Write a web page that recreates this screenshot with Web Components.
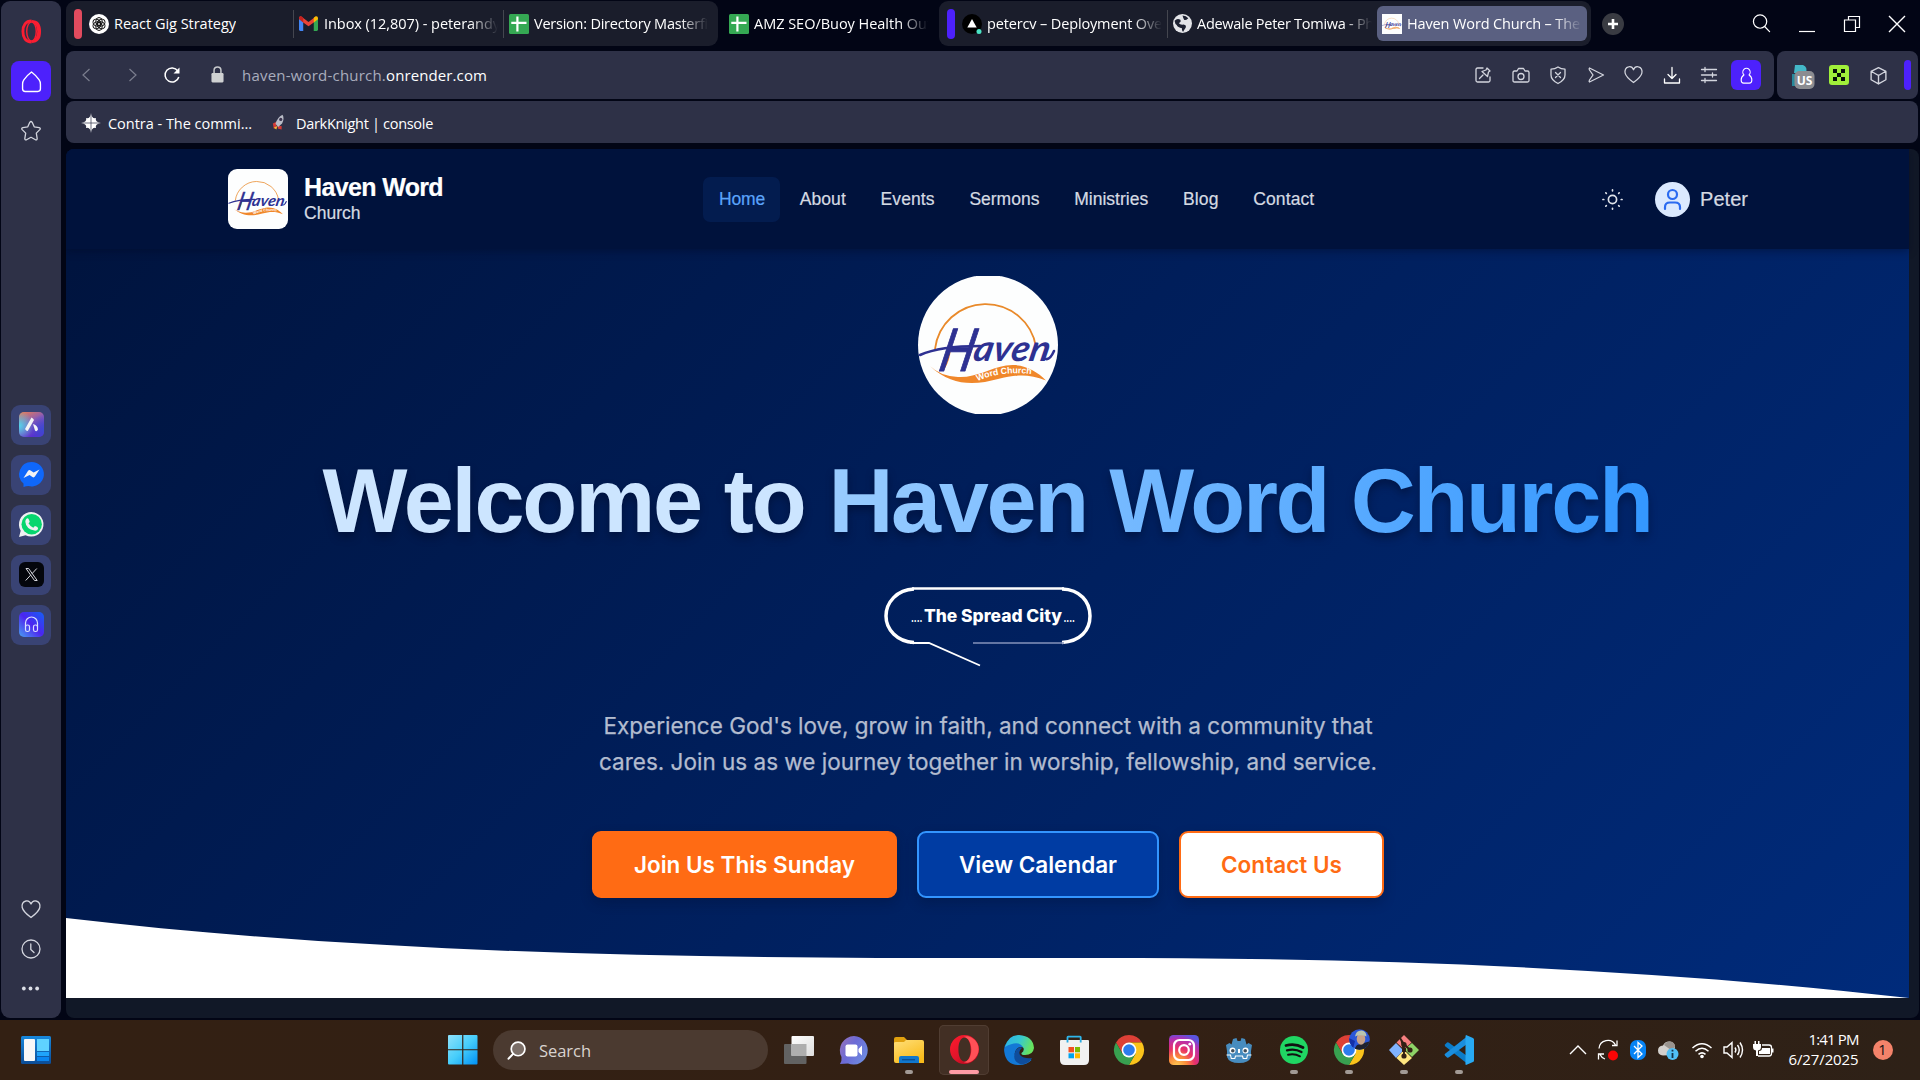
<!DOCTYPE html>
<html lang="en">
<head>
<meta charset="utf-8">
<title>Haven Word Church</title>
<style>
html,body{margin:0;height:1080px;width:1920px;overflow:hidden;background:#020515}
body{font-family:"Open Sans","Noto Sans",sans-serif;font-size:14.5px;color:#fff}
</style>
</head>
<body>
<desktop-screen></desktop-screen>
<script>
const ICONS = {
opera:['0 0 30 30','<defs><linearGradient id="a" x2="1" y2="1"><stop stop-color="#ff1b2d"/><stop offset=".5" stop-color="#e0142a"/><stop offset="1" stop-color="#a30217"/></linearGradient></defs><path fill-rule="evenodd" fill="url(#a)" d="M15 0a15 15 0 1 0 0 30a15 15 0 1 0 0-30zM15 2.6c4 0 6.300 5.400 6.300 12.400s-2.300 12.400-6.300 12.400s-6.300-5.400-6.300-12.400s2.300-12.400 6.300-12.400z"/><path fill="#ff5057" d="M14 2c5 .4 8 6 8 13s-3 12.600-8 13c3 1.300 6 .6 9-1.200c9-6 9-18 0-23.600c-3-2-6-2.400-9-1.200z"/>'],
operaflat:['0 0 22 26','<path fill="none" stroke="#fa1e32" stroke-width="3" d="M11 2C5 2 2 6.500 2 13s3 11 9 11"/><path fill="none" stroke="#fa1e32" stroke-width="4" d="M11 3c6 0 8 4.500 8 10s-2 10-8 10"/><ellipse cx="11" cy="13" rx="5" ry="10" fill="#2e3147" stroke="#fa1e32" stroke-width="1.500"/>'],
home:['0 0 20 20','<path class="s" stroke-width="1.500" d="M10 1c2.500 1.800 5 4.300 7.300 7.500q1.200 1.700 1.200 4v4.500q0 2.500-2.500 2.500H4q-2.500 0-2.500-2.500v-4.500q0-2.300 1.200-4C5 5.300 7.500 2.800 10 1z"/>'],
star:['0 0 22 22','<path class="s" d="M9.800 2.300q1.200-1.600 2.400 0l2 4.500 5 .8q1.800.5.600 2l-3.500 3.500.9 5.500q0 1.800-1.700 1.200L11 17.300l-4.500 2.500q-1.700.6-1.700-1.200l.9-5.500L2.200 9.600q-1.200-1.500.6-2l5-.8z" stroke-width="1.300"/>'],
aria:['0 0 25 25','<defs><linearGradient id="a" x2=".5" y2="1"><stop stop-color="#f08050"/><stop offset=".5" stop-color="#8a5bb5"/><stop offset="1" stop-color="#5a2fd0"/></linearGradient><radialGradient id="b" cx="0" cy=".55" r=".6"><stop stop-color="#52d5ec"/><stop offset="1" stop-color="#52d5ec" stop-opacity="0"/></radialGradient><radialGradient id="c" cx="1" cy=".7" r=".6"><stop stop-color="#3b4ad0"/><stop offset="1" stop-color="#3b4ad0" stop-opacity="0"/></radialGradient></defs><rect width="25" height="25" rx="5" fill="url(#a)"/><rect width="25" height="25" rx="5" fill="url(#b)"/><rect width="25" height="25" rx="5" fill="url(#c)"/><path fill="#f4f4f6" d="M12.500 5.500q2 1 2.500 2.500L9 18.500q-1 1.500-3-1.500zM14 12q4.500 1 5 5.500-1.500 3-3 1z"/>'],
messenger:['0 0 25 25','<path fill="#0f67fb" d="M12.500 0a12.300 12.200 0 1 1-3 24q-2.500 0-5 1v-3.500A12.300 12.200 0 0 1 12.500 0z"/><path fill="#f2f2f4" d="M4.500 16l4.600-7.200q1-1.400 2.500-.4l3 2.200 5.900-3-4.600 7q-1 1.400-2.500.4l-2.800-2z"/>'],
whatsapp:['0 0 25 25','<path fill="#eef0f2" d="M0 25l1.700-6.300A12.300 12.300 0 1 1 6.500 23.200z"/><circle cx="12.700" cy="12.200" r="10.200" fill="#06d66e"/><path fill="#eef0f2" d="M7.300 7q1.400-1.500 2.400.3l1 2.200q-.2 1-1.200 1.800 1.800 3.300 4.800 4.400l1.600-1.600q2.500.7 3.200 1.800-.3 3-3.600 2.700Q7 17 6.300 9.800q0-1.700 1-2.800z"/>'],
x:['0 0 25 25','<rect width="25" height="25" rx="6" fill="#04060c"/><path fill="none" stroke="#d6d7dd" stroke-width="1" d="M7 6.500h2.600l8.600 12h-2.700zM17.800 6.500l-4.900 5.300M6.700 18.500l5-5.400"/>'],
phones:['0 0 25 25','<defs><linearGradient id="a" x1="0" y1="1" x2="1" y2="0"><stop stop-color="#4aa0f0"/><stop offset=".5" stop-color="#4c25f0"/><stop offset="1" stop-color="#1460f5"/></linearGradient></defs><rect width="25" height="25" rx="5" fill="url(#a)"/><path fill="none" stroke="#dbe0ff" stroke-width="1.200" d="M6.500 15v-4a6 6 0 0 1 12 0v4"/><rect x="6.500" y="13" width="4" height="6.500" rx="1.800" fill="none" stroke="#dbe0ff" stroke-width="1.200"/><rect x="14.500" y="13" width="4" height="6.500" rx="1.800" fill="none" stroke="#dbe0ff" stroke-width="1.200"/>'],
heart:['0 0 20 20','<path class="s" d="M10 5C9 2.500 6.800 1.500 4.800 2 1.700 2.600.6 5.500 1.200 8.500c.8 3.800 4.800 7 8.800 10 4-3 8-6.200 8.800-10 .6-3-.5-5.900-3.600-6.500C13.200 1.500 11 2.500 10 5z"/>'],
clock:['0 0 20 20','<circle class="s" cx="10" cy="10" r="9"/><path class="s" d="M9.800 5v5.500l3.200 3"/>'],
dots:['0 0 20 20','<g fill="#dcdee6"><circle cx="3" cy="10" r="2"/><circle cx="10" cy="10" r="2"/><circle cx="17" cy="10" r="2"/></g>'],
gpt:['0 0 20 20','<circle cx="10" cy="10" r="10" fill="#fff"/><g fill="none" stroke="#111" stroke-width="1"><ellipse cx="10" cy="7.500" rx="3.300" ry="4" transform="rotate(0 10 10)"/><ellipse cx="10" cy="7.500" rx="3.300" ry="4" transform="rotate(60 10 10)"/><ellipse cx="10" cy="7.500" rx="3.300" ry="4" transform="rotate(120 10 10)"/><ellipse cx="10" cy="7.500" rx="3.300" ry="4" transform="rotate(180 10 10)"/><ellipse cx="10" cy="7.500" rx="3.300" ry="4" transform="rotate(240 10 10)"/><ellipse cx="10" cy="7.500" rx="3.300" ry="4" transform="rotate(300 10 10)"/></g>'],
gmail:['0 0 18 14','<path fill="#4285f4" d="M0 2l4 3v9H1.200Q0 14 0 12.800z"/><path fill="#34a853" d="M18 2l-4 3v9h2.800q1.200 0 1.200-1.200z"/><path fill="#ea4335" d="M0 2Q0 .2 1.800.2L9 5.600 16.200.2 14 6 9 9.500 4 6z"/><path fill="#c5221f" d="M0 2Q.2-.6 2.600.4L4 1.500V6L0 3z"/><path fill="#fbbc04" d="M18 2q-.2-2.600-2.600-1.600L14 1.500V6l4-3z"/>'],
sheet:['0 0 20 20','<rect width="20" height="20" rx="1.500" fill="#35a853"/><path fill="#fff" d="M7.300 2.500h2.200v5.300h8v2.200h-8v7.500H7.300V10h-5V7.800h5z"/>'],
vercel:['0 0 20 20','<circle cx="10" cy="10" r="10" fill="#000"/><path fill="#fff" d="M10 5l4.700 8.500H5.300z"/><circle cx="17" cy="17.500" r="2.500" fill="#4ae3c4"/>'],
globe:['0 0 18 18','<circle cx="9" cy="9" r="9" fill="#e3e4e8"/><path fill="#1c2030" d="M1.500 6.500Q4 3.500 7 5.500 8 8 5.500 8.500q1 2 4.500 1.500 3 .5 2 3-1.500 2-2.500 4-1.500-1-1-3.500-4-.5-5-3-1.500-.5-2-4zM9 1.500q3.500 0 5.500 2.500Q12 6.500 10.500 5.500 9.500 3.500 9 1.500z"/>'],
plus:['0 0 22 22','<circle cx="11" cy="11" r="11" fill="#393b42"/><path stroke="#fff" stroke-width="2.600" d="M11 6v10M6 11h10"/>'],
search:['0 0 20 20','<circle class="s" cx="8.500" cy="8" r="7"/><path class="s" stroke-width="1.800" d="M13.300 13.200L18.500 18.500"/>'],
min:['0 0 18 18','<path stroke="#fff" stroke-width="1.200" d="M1 16.500h16"/>'],
restore:['0 0 18 18','<path fill="none" stroke="#fff" stroke-width="1.200" d="M1.500 5h11v11.500h-11zM5.500 5V1.500h11V12.500h-4"/>'],
close:['0 0 18 18','<path stroke="#fff" stroke-width="1.400" d="M1 1l16 16M17 1L1 17"/>'],
back:['0 0 18 18','<path fill="none" stroke="#7b7e8e" stroke-width="1.200" d="M12.500 3L6 9l6.500 6"/>'],
fwd:['0 0 18 18','<path fill="none" stroke="#7b7e8e" stroke-width="1.200" d="M5.500 3L12 9l-6.500 6"/>'],
reload:['0 0 18 18','<path fill="none" stroke="#fff" stroke-width="1.500" d="M14.800 5A7 7 0 1 0 15.800 11"/><path fill="#fff" d="M16.500 1.500v6h-6z"/>'],
lock:['0 0 14 18','<path fill="none" stroke="#c8cacd" stroke-width="1.600" d="M3.300 8V4.500q0-3.500 3.700-3.500t3.700 3.500V8"/><rect x=".5" y="7.500" width="13" height="10" rx="1.200" fill="#cfd1d2"/>'],
compose:['0 0 18 18','<path class="s" d="M9 2H3.500Q2 2 2 3.500v11Q2 16 3.500 16h11q1.500 0 1.500-1.500V11"/><path class="s" d="M5.500 12.500L9 9M13 2l3 3-1.500 1-1 4.500L8 5.500l4-1.500z"/>'],
camera:['0 0 18 18','<path class="s" d="M2.500 5H5l1.500-2.500h5L13 5h2.500Q17 5 17 6.500v8q0 1.500-1.500 1.500h-13Q1 16 1 14.500v-8Q1 5 2.500 5z"/><circle class="s" cx="9" cy="10.500" r="3"/>'],
shield:['0 0 18 18','<path class="s" d="M9 1q3 2 7 2.200V9q0 5-7 8.500Q2 14 2 9V3.200Q6 3 9 1z"/><path class="s" d="M6.500 6.500l5 5M11.500 6.500l-5 5"/>'],
send:['0 0 18 18','<path class="s" d="M2.500 2L16.500 9 2.500 16q-.8-.5 0-2L6 9 2.500 4Q1.700 2.500 2.500 2z"/>'],
download:['0 0 18 18','<path class="s" stroke-width="1.600" d="M9 1.500v11M5 8.500l4 4 4-4M1.500 13v4h15v-4"/>'],
sliders:['0 0 18 18','<path class="s" d="M1.500 3.500h15M1.500 9h15M1.500 14.500h15M5 1.500v4M12.500 7v4M5 12.500v4"/>'],
person:['0 0 18 20','<path class="s" stroke-width="1.500" d="M6 9.300a4.300 4.600 0 1 1 6 0q3.300 2 3.300 6 0 3.500-3 3.700H5.700q-3-.2-3-3.700 0-4 3.300-6z"/>'],
us:['0 0 24 26','<path fill="#43b7c8" d="M4 1h8q5 2 3 8H3z"/><path fill="#27899b" d="M1 10h4v12H1z"/><rect x="3.500" y="7" width="20" height="18" rx="5" fill="#8b8c91"/><text x="13.500" y="21" font-family="Open Sans" font-weight="700" font-size="12" fill="#fff" text-anchor="middle">US</text>'],
green:['0 0 20 20','<rect width="20" height="20" rx="3" fill="#a0f03a"/><path fill="#08110a" d="M4 4h4v4H4zM12 4h4v4h-4zM8 8h4v4H8zM4 12h4v4H4zM12 12h4v4h-4z"/>'],
cube:['0 0 18 18','<path class="s" stroke="#fff" d="M9 1.500l7 3.500v8l-7 4-7-4V5zM2 5l7 4 7-4M9 9v8"/>'],
contra:['0 0 20 20','<path fill="#fff" d="M10 0Q11 6.500 15 5 13.500 9 20 10 13.500 11 15 15 11 13.500 10 20 9 13.500 5 15 6.500 11 0 10 6.500 9 5 5 9 6.500 10 0z"/><circle cx="10" cy="10" r="5.500" fill="#fff"/><path stroke="#2e3147" stroke-width=".7" d="M10 0v20M0 10h20"/>'],
rocket:['0 0 16 18','<path fill="#d33a35" d="M1 10l4-2v7l-3 1zM6 13l5 0v4l-4-1z"/><path fill="#b9bcc7" d="M12 0q2.500 4-.5 10L7 14 4 10.500Q6 3 12 0z"/><circle cx="10" cy="5.500" r="1.800" fill="#3c3550"/><path fill="#f7bb37" d="M2 15l4-2-1 4z"/>'],
sun:['0 0 20 20','<g fill="none" stroke="#dfe3ea" stroke-width="1.600" stroke-linecap="round"><circle cx="10" cy="10" r="3.900"/><path d="M10 .9v.8M10 18.300v.8M.9 10h.8M18.300 10h.8M3.600 3.600l.5.5M15.900 15.900l.5.5M3.600 16.400l.5-.5M15.900 4.100l.5-.5"/></g>'],
avatar:['0 0 35 35','<circle cx="17.500" cy="17.500" r="17.500" fill="#dbe9fe"/><g fill="none" stroke="#2b6bf0" stroke-width="2.200" stroke-linecap="round"><circle cx="17.500" cy="12.500" r="4.500"/><path d="M10 27v-2q0-4.500 5-4.500h5q5 0 5 4.500v2"/></g>'],
widgets:['0 0 30 28','<defs><linearGradient id="a" y2="1" x2="0"><stop stop-color="#1788dd"/><stop offset="1" stop-color="#0c4c96"/></linearGradient></defs><rect width="30" height="28" rx="1.500" fill="url(#a)"/><rect x="3" y="3" width="11" height="22" rx="1" fill="#f7f7f7"/><path fill="#5fd2ff" d="M16 3h12v12H16z"/><path fill="#1fa4fb" d="M16 16h12v4H16z"/><path fill="#0a86f0" d="M16 21h12v4H16z"/>'],
win:['0 0 30 30','<defs><linearGradient id="a" gradientUnits="userSpaceOnUse" x1="0" y1="0" x2="30" y2="30"><stop stop-color="#8fe2fb"/><stop offset=".5" stop-color="#46cdfb"/><stop offset="1" stop-color="#0090f5"/></linearGradient></defs><path fill="url(#a)" d="M0 1q0-1 1-1h13.400v14.400H0zM15.600 0H29q1 0 1 1v13.400H15.600zM0 15.600h14.400V30H1q-1 0-1-1zM15.600 15.600H30V29q0 1-1 1H15.600z"/>'],
tsearch:['0 0 18 18','<circle cx="10.500" cy="7.500" r="6.500" fill="#7b6e67" stroke="#fff" stroke-width="1.600"/><path stroke="#fff" stroke-width="2" stroke-linecap="round" d="M5.800 12.200L1.500 16.700"/>'],
taskview:['0 0 30 30','<defs><linearGradient id="a" x2="1" y2="1"><stop stop-color="#fff"/><stop offset="1" stop-color="#ddd"/></linearGradient></defs><rect y="9" width="22.500" height="20" rx="1" fill="#626262"/><rect x="7.500" y="1" width="22.500" height="20" rx="1" fill="url(#a)"/><path fill="#aeaeae" d="M7.500 9h15v12h-15z"/>'],
chat:['0 0 30 30','<defs><linearGradient id="a" x2="1" y2=".6"><stop stop-color="#9a72b8"/><stop offset=".5" stop-color="#6b6ad6"/><stop offset="1" stop-color="#6e8ae0"/></linearGradient></defs><path fill="url(#a)" d="M15 1a14.300 14.300 0 1 1-6 27.500L1 29q2-3 1.500-7A14.300 14.300 0 0 1 15 1z"/><rect x="6.500" y="9.500" width="12" height="12" rx="2" fill="#fff"/><path fill="#fff" d="M19.500 14l3.500-3.500v10L19.500 17z"/>'],
folder:['0 0 30 30','<defs><linearGradient id="a" x2=".6" y2="1"><stop stop-color="#ffdf79"/><stop offset="1" stop-color="#f9bb1b"/></linearGradient></defs><path fill="#e0a00e" d="M0 4q0-2 2-2h8l3 3-2 5H0z"/><path fill="url(#a)" d="M0 8q0-1 2-1h8l2-2h16q2 0 2 2v21H2q-2 0-2-2z"/><path fill="#1177cc" d="M5 28v-5q0-2 2-2h16q2 0 2 2v5z"/><path fill="#0a4f95" d="M8 24h13v1.400H8z"/>'],
edge:['0 0 30 30','<defs><linearGradient id="a" x1="0" x2="1" y2=".3"><stop stop-color="#2bb1ea"/><stop offset=".55" stop-color="#37c8cf"/><stop offset="1" stop-color="#67e35f"/></linearGradient></defs><path fill="#1378d6" d="M.3 17Q-1 8 6 7q10-2 14 6-5-3-8 2t1 9q5 3 12 0 2 0 2.500 1Q23 30 15 30 2 30 .3 17z"/><path fill="#0f4d9c" d="M12 15q4-4 6-2-4 3-2 7 4 4 12 3-4 7-12 6-9-4-4-14z"/><path fill="url(#a)" d="M1 12Q4 0 15 0q14 1 15 13-1 7-9 7-4 0-3.500-2 3-2 2-5Q15 4 1 12z"/>'],
store:['0 0 30 30','<path fill="none" stroke="#2fb6ea" stroke-width="1.800" d="M8.500 8V2.300q0-.6.600-.6h12q.6 0 .6.600V8"/><path fill="#f1f1f1" d="M1 6q0-1 1-1h27q1 0 1 1v19q0 5-5 5H6q-5 0-5-5z"/><path fill="#29abe2" d="M7.600 5h1.800v2.500H7.600zM20.800 5h1.800v2.500h-1.800z"/><path fill="#f25022" d="M9.500 12H15v5.300H9.500z"/><path fill="#7fba00" d="M16 12h5v5.300h-5z"/><path fill="#00a4ef" d="M9.500 18.300H15v5H9.500z"/><path fill="#ffb900" d="M16 18.300h5v5h-5z"/>'],
chrome:['0 0 30 30','<path fill="#dd4036" d="M2 7.500a15 15 0 0 1 26 0H15l-6.500 11z"/><path fill="#fbc31b" d="M28 7.500A15 15 0 0 1 15 30l6.500-11.200L15 7.500z"/><path fill="#38a050" d="M2 7.500A15 15 0 0 0 15 30l6.500-11.200-13 0z"/><circle cx="15" cy="15" r="7.400" fill="#fff"/><circle cx="15" cy="15" r="5.800" fill="#2d7cee"/>'],
insta:['0 0 30 30','<defs><radialGradient id="a" cx=".27" cy="1.050" r="1.100"><stop stop-color="#fed056"/><stop offset=".3" stop-color="#fb8a3a"/><stop offset=".55" stop-color="#e8306a"/><stop offset=".85" stop-color="#b030b5"/><stop offset="1" stop-color="#5a55e0"/></radialGradient></defs><rect width="30" height="30" rx="4.500" fill="url(#a)"/><g fill="none" stroke="#fff" stroke-width="2.200"><rect x="5" y="5" width="20" height="20" rx="5.500"/><circle cx="15" cy="15" r="4.800"/></g><circle cx="20.800" cy="9.200" r="1.400" fill="#fff"/>'],
godot:['0 0 30 30','<path fill="#478cbf" d="M2 10l3.500-2 2 1.500L9 4l3.500-1 1 3h3l1-3L21 4l1.500 5.500L24.500 8 28 10l-1 6v6q-2 6-12 6T3 22v-6z"/><path fill="none" stroke="#fff" stroke-width="1.100" d="M2.500 20h4l.8 3.500h3.500l.7-2.500h7l.7 2.500h3.500l.8-3.500h4"/><circle cx="8.500" cy="15.500" r="3" fill="#fff"/><circle cx="21.500" cy="15.500" r="3" fill="#fff"/><circle cx="8.800" cy="15.700" r="1.800" fill="#40505c"/><circle cx="21.200" cy="15.700" r="1.800" fill="#40505c"/><path stroke="#fff" stroke-width="2" d="M15 14v4"/>'],
spotify:['0 0 30 30','<circle cx="15" cy="15" r="14" fill="#20d663"/><g fill="none" stroke="#111" stroke-linecap="round"><path stroke-width="2.800" d="M7 10.500q9-2.500 17 2"/><path stroke-width="2.300" d="M8 15.300q8-2 14.500 1.700"/><path stroke-width="1.900" d="M9 19.800q6.500-1.500 12 1.500"/></g>'],
chrome2:['0 0 40 40','<g transform="translate(5 5)"><path fill="#dd4036" d="M2 7.500a15 15 0 0 1 26 0H15l-6.500 11z"/><path fill="#fbc31b" d="M28 7.500A15 15 0 0 1 15 30l6.500-11.200L15 7.500z"/><path fill="#38a050" d="M2 7.500A15 15 0 0 0 15 30l6.500-11.200-13 0z"/><circle cx="15" cy="15" r="7.400" fill="#fff"/><circle cx="15" cy="15" r="5.800" fill="#2d7cee"/></g><defs><clipPath id="k"><circle cx="30.500" cy="9.500" r="10.300"/></clipPath></defs><g clip-path="url(#k)"><path fill="#2a56d8" d="M20-1h22v22H20z"/><path fill="#1330a8" d="M20 8l6 3-2 8h-4z"/><path fill="#20222e" d="M24 21l4-6 14-4v10z"/><ellipse cx="32" cy="9" rx="4.300" ry="5.800" fill="#c8a28a"/><path fill="#b9c4b0" d="M26 6.500q1-6.500 7-6 4.500 1 4.500 6-6-2.500-11.500 0z"/></g>'],
git:['0 0 30 30','<path fill="#f78080" d="M15 0l7.500 7.500-5.500 5H13L7.500 7.500z"/><path fill="#80b3ff" d="M7 8l6 6v3l-6 6-7-8z"/><path fill="#8ed367" d="M23 8l7 7-7 7-6-6v-3z"/><path fill="#ffe680" d="M15 30l-7.500-7L13 17h4l6 6z"/><g stroke="#332014" stroke-width="1.800" fill="#332014"><path d="M11 3l4 6v12M15 9l6 6"/><circle cx="15" cy="9.500" r="1.700"/><circle cx="21" cy="15" r="1.700"/><circle cx="15" cy="21" r="1.700"/></g>'],
vscode:['0 0 30 30','<path fill="#0b7cc9" d="M1 9.500l2-2q1-.5 2 .2L23 21v7.500L.8 11z"/><path fill="#1a8ede" d="M1 20.500l2 2q1 .5 2-.2L23 9V1.500L.8 19q-.5.800.2 1.500z"/><path fill="#28a9f2" d="M22 0l7 3q1 .5 1 1.500v21q0 1-1 1.500l-7 3q-1-.5-.5-2V2q0-1.500.5-2z"/>'],
up:['0 0 20 20','<path fill="none" stroke="#fff" stroke-width="1.400" d="M2 14l8-8 8 8"/>'],
sync:['0 0 22 22','<g fill="none" stroke="#fff" stroke-width="1.300"><path d="M2 9.500A8.800 8.800 0 0 1 18.500 6M20 1.500v5h-5M8 20A8.800 8.800 0 0 1 3 15.500M1.500 20.500v-5.500h5.500"/></g><circle cx="16" cy="16.500" r="5" fill="#fb0505"/>'],
bt:['0 0 20 22','<rect x="2" y="1" width="16" height="20" rx="7" fill="#0583f5"/><path fill="none" stroke="#fff" stroke-width="1.300" d="M6 7l8 8-4 3.500v-15L14 7l-8 8"/>'],
cloud:['0 0 22 22','<path fill="#d3d0cd" d="M6 16.500q-5-.5-5-5t5-5q2-4.500 7-4 5 1 5 5.500l-2 8z"/><path fill="#99938e" d="M7 6q2-4 6.500-3.500Q18 3 18 8l-4 3z"/><circle cx="15.500" cy="15" r="6" fill="#50bff5"/><path stroke="#15324a" stroke-width="1.800" d="M15.500 14v5M15.500 10.800v1.800"/>'],
wifi:['0 0 22 22','<g fill="none" stroke="#fff" stroke-width="1.500"><path d="M1.500 9q9.500-8.500 19 0M4.500 12.300q6.500-6 13 0M7.500 15.400q3.500-3 7 0"/></g><circle cx="11" cy="17.500" r="1.800" fill="#fff"/>'],
sound:['0 0 22 22','<g fill="none" stroke="#fff" stroke-width="1.400"><path d="M2 8h3l5-4.500v15L5 14H2zM13 8.500q1.800 2.500 0 5M15.500 6q3.500 5 0 10M18 3.500q5 7.500 0 15"/></g>'],
battery:['0 0 22 22','<path fill="#fff" d="M10 9h8v6H7v-3q3 0 3-3zM1 5h8v3q0 3-3 3.500V17H4v-5.500Q1 11 1 8zM2.500 2H4v4H2.500zM6 2h1.500v4H6zM20 9.500h1.500v4H20z"/><path fill="none" stroke="#fff" stroke-width="1.300" d="M10 6h7q2.500 0 2.500 2.500v6q0 2.500-2.500 2.500H6"/>'],
};

function define(name, html, init){
  const t = document.createElement('template');
  t.innerHTML = html;
  customElements.define(name, class extends HTMLElement{
    constructor(){ super(); this.attachShadow({mode:'open'}).append(t.content.cloneNode(true)); }
    connectedCallback(){ if(init) init(this, this.shadowRoot); }
  });
}

/* <ui-icon name w h> draws one glyph from the icon table */
define('ui-icon', `<style>:host{display:block;flex:none}svg{display:block;overflow:visible}.s{fill:none;stroke:var(--ink,#d3d5de);stroke-width:1.300;stroke-linejoin:round;stroke-linecap:round}</style>`,
(el, root)=>{
  if(root.querySelector('svg')) return;
  const [vb, body] = ICONS[el.getAttribute('name')];
  const w = el.getAttribute('w') || 20, h = el.getAttribute('h') || w;
  const holder = document.createElement('template');
  holder.innerHTML = `<svg width="${w}" height="${h}" viewBox="${vb}">${body}</svg>`;
  root.append(holder.content);
});

/* <fit-text w> spreads its text over an exact width through letter spacing */
const pen = document.createElement('canvas').getContext('2d');
define('fit-text', `<style>:host{display:block;flex:none;white-space:nowrap}</style><slot></slot>`,
(el)=>{
  const cs = getComputedStyle(el), s = el.textContent, w = +el.getAttribute('w');
  pen.font = `${cs.fontWeight} ${cs.fontSize} ${cs.fontFamily}`;
  el.style.width = w + 'px';
  el.style.letterSpacing = ((w - pen.measureText(s).width) / s.length).toFixed(3) + 'px';
});

define('haven-logo', `<style>:host{display:block;overflow:hidden;background:#fdfefe;flex:none}svg{display:block;width:100%;height:100%}</style>
<svg viewBox="0 0 140 140" preserveAspectRatio="xMidYMid slice">
<path fill="none" stroke="#e98a2b" stroke-width="1.800" d="M17 74A51 51 0 0 1 118 72"/>
<path fill="#f0872a" d="M30 74q-2 12-9 22l5-1q6-9 7-22z"/>
<path fill="#f0872a" d="M12 91Q22 101 40 102C58 103 72 93 88 90.500C104 88 118 95 128 105.500C110 98 96 100 80 104C58 110 34 112 12 91Z"/>
<path fill="none" stroke="#2e3192" stroke-width="2.600" stroke-linecap="round" d="M2 80Q22 71 62 71"/>
<g font-family="Lato" font-style="italic" font-weight="700" fill="#2e3192">
<text transform="translate(19 96) skewX(-13)" font-size="59" font-weight="400" stroke="#2e3192" stroke-width="1" stroke-linejoin="round" textLength="34" lengthAdjust="spacingAndGlyphs">H</text>
<text transform="translate(54 86) skewX(-12)" font-size="36" textLength="76" lengthAdjust="spacingAndGlyphs">aven</text></g>
<path fill="none" stroke="#2e3192" stroke-width="2.600" stroke-linecap="round" d="M128 84q4 1 8-8"/>
<path id="p" fill="none" d="M59.500 106Q85 95 115 99.500"/>
<text font-family="Liberation Sans" font-weight="700" font-size="8.800" fill="#fff"><textPath href="#p" textLength="55">Word Church</textPath></text>
</svg>`);

define('tab-item', `<style>:host{display:flex;align-items:center;height:35px;padding:0 5px;gap:5px;width:200px;box-sizing:border-box;flex:none}
:host([active]){background:#5a6081;border-radius:6px}
::slotted(fit-text){overflow:hidden}
div{overflow:hidden;flex:1;line-height:20px}
:host([fade]) div{-webkit-mask:linear-gradient(90deg,#000 calc(100% - 28px),transparent)}
</style><slot name="icon"></slot><div><slot></slot></div>`);

define('tab-strip', `<style>
:host{display:flex;height:47px;align-items:center}
.island{display:flex;align-items:center;background:#1a1d2b;height:45px;border-radius:9px;box-sizing:border-box;width:652px;padding-left:8px;margin-top:-2px}
.mark{width:8px;height:30px;border-radius:4px;margin-right:2px}
i{width:1px;height:28px;background:#44464f}
.ctl{display:flex;align-items:center;margin:-2px 0 0 auto;gap:27px;padding-right:12px}
.plus{margin:-2px 0 0 11px}
</style>
<div class="island"><span class="mark" style="background:#e24b5e"></span>
<tab-item style="width:209px"><ui-icon slot="icon" name="gpt"></ui-icon><fit-text w="122">React Gig Strategy</fit-text></tab-item><i></i>
<tab-item fade style="width:209px;gap:6px"><ui-icon slot="icon" name="gmail" w="19" h="15"></ui-icon><fit-text w="176">Inbox (12,807) - peterandy</fit-text></tab-item><i></i>
<tab-item fade style="width:209px"><ui-icon slot="icon" name="sheet"></ui-icon><fit-text w="174">Version: Directory Masterfi</fit-text></tab-item></div>
<tab-item fade style="width:209px;margin:-2px 6px 0 6px"><ui-icon slot="icon" name="sheet"></ui-icon><fit-text w="178">AMZ SEO/Buoy Health Out</fit-text></tab-item>
<div class="island"><span class="mark" style="background:#4d21fc"></span>
<tab-item fade style="width:210px"><ui-icon slot="icon" name="vercel"></ui-icon><fit-text w="175">petercv – Deployment Ove</fit-text></tab-item><i></i>
<tab-item fade style="width:209px"><ui-icon slot="icon" name="globe" w="19"></ui-icon><fit-text w="177">Adewale Peter Tomiwa - Ph</fit-text></tab-item>
<tab-item active fade style="width:210px"><haven-logo slot="icon" style="width:20px;height:20px"></haven-logo><fit-text w="173">Haven Word Church – The</fit-text></tab-item></div>
<ui-icon class="plus" name="plus" w="22"></ui-icon>
<div class="ctl"><ui-icon name="search" w="19" style="--ink:#fff"></ui-icon><ui-icon name="min" w="18"></ui-icon><ui-icon name="restore" w="18"></ui-icon><ui-icon name="close" w="18"></ui-icon></div>`);

define('address-bar', `<style>
:host{display:flex;height:48px;gap:3px}
div{display:flex;align-items:center;background:#2e3147;border-radius:8px;box-sizing:border-box}
.url{width:1708px;padding:0 13px 0 11px}
.acts{background:none;margin-left:auto;gap:19.450px}
.acts>ui-icon{margin-top:-1px}
.me{width:30px;height:30px;background:#4d21fc;border-radius:6px;justify-content:center;margin-left:-6.500px}
.ext{width:141px;padding-left:14px}
b{width:7px;height:30px;background:#4d21fc;border-radius:4px 3px 3px 4px;margin-left:16px}
</style>
<div class="url"><ui-icon name="back" w="18"></ui-icon><ui-icon name="fwd" w="18" style="margin-left:29px"></ui-icon><ui-icon name="reload" w="18" style="margin-left:21px"></ui-icon><ui-icon name="lock" w="13" h="17" style="margin:-1px 0 0 30px"></ui-icon>
<fit-text w="144" style="margin-left:18px;color:#a9adbd;font-size:15px">haven-word-church.</fit-text><fit-text w="101" style="font-size:15px">onrender.com</fit-text>
<div class="acts"><ui-icon name="compose" w="18"></ui-icon><ui-icon name="camera" w="18"></ui-icon><ui-icon name="shield" w="18"></ui-icon><ui-icon name="send" w="18"></ui-icon><ui-icon name="heart" w="19"></ui-icon><ui-icon name="download" w="18" style="--ink:#fff"></ui-icon><ui-icon name="sliders" w="18"></ui-icon><div class="me"><ui-icon name="person" w="17" style="--ink:#fff"></ui-icon></div></div></div>
<div class="ext"><ui-icon name="us" w="24" h="26" style="margin-top:4px"></ui-icon><ui-icon name="green" w="20" style="margin-left:14px"></ui-icon><ui-icon name="cube" w="19" style="margin-left:20px"></ui-icon><b></b></div>`);

define('bookmark-bar', `<style>:host{display:flex;align-items:center;height:42px;background:#2e3147;border-radius:8px;padding-left:15px;margin-top:2px}fit-text{margin-top:2px}</style>
<ui-icon name="contra" w="20" style="margin-top:1px"></ui-icon><fit-text w="144" style="margin-left:7px">Contra - The commi...</fit-text><ui-icon name="rocket" w="14" h="17" style="margin:0 10px 0 20px"></ui-icon><fit-text w="137">DarkKnight | console</fit-text>`);

define('side-bar', `<style>
:host{display:flex;flex-direction:column;align-items:center;width:60px;height:1017px;background:#2e3147;border-radius:9px;box-sizing:border-box;padding-top:18px;flex:none}
.home{width:40px;height:40px;border-radius:8px;background:#4d21fc;display:grid;place-items:center;margin:17px 0 19px}
.app{width:40px;height:40px;border-radius:9px;background:#394374;display:grid;place-items:center;margin-bottom:10px}
.apps{margin-top:263px}.app ui-icon{margin-top:-1px}.low{margin-top:244px;display:grid;gap:20px}
</style>
<ui-icon name="operaflat" w="21" h="25"></ui-icon>
<div class="home"><ui-icon name="home" w="21" style="--ink:#fff"></ui-icon></div><ui-icon name="star" w="22"></ui-icon>
<div class="apps"><div class="app"><ui-icon name="aria" w="25"></ui-icon></div><div class="app"><ui-icon name="messenger" w="25"></ui-icon></div><div class="app"><ui-icon name="whatsapp" w="25"></ui-icon></div><div class="app"><ui-icon name="x" w="25"></ui-icon></div><div class="app"><ui-icon name="phones" w="25"></ui-icon></div></div>
<div class="low"><ui-icon name="heart" w="20"></ui-icon><ui-icon name="clock" w="20"></ui-icon><ui-icon name="dots" w="19"></ui-icon></div>`);

define('site-header', `<style>
:host{display:flex;align-items:center;height:100px;box-sizing:border-box;background:#00123c;box-shadow:0 2px 8px rgba(0,8,35,.45);padding-left:162px;font-family:"Liberation Sans",sans-serif;font-size:17.500px;color:#d5dae2;-webkit-text-stroke:.2px}
haven-logo{width:60px;height:60px;border-radius:9px}
.name{width:399px;margin-left:16px;padding-bottom:1px}
nav{display:flex;gap:2.800px;width:735px;flex:none}
nav span{display:flex;align-items:center;height:45px;padding:0 16px;border-radius:7px}
.on{background:#031c4f;color:#5ba4fb}
</style>
<haven-logo></haven-logo>
<div class="name"><fit-text w="139" style="font-weight:700;font-size:25px;line-height:29px;color:#fff">Haven Word</fit-text><fit-text w="56.500" style="line-height:22px">Church</fit-text></div>
<nav><span class="on" style="padding-right:15px"><fit-text w="46">Home</fit-text></span><span style="margin-left:1px"><fit-text w="46">About</fit-text></span><span><fit-text w="54">Events</fit-text></span><span><fit-text w="70">Sermons</fit-text></span><span><fit-text w="74">Ministries</fit-text></span><span><fit-text w="35.500">Blog</fit-text></span><span><fit-text w="61">Contact</fit-text></span></nav>
<ui-icon name="sun" w="21" style="margin-left:164px"></ui-icon><ui-icon name="avatar" w="35" style="margin-left:32px"></ui-icon><fit-text w="48" style="font-size:20px;margin-left:10px">Peter</fit-text>`);

define('action-button', `<style>:host{display:flex;align-items:center;justify-content:center;box-sizing:border-box;height:67px;border-radius:9px;border:2px solid;font-weight:600;font-size:22.500px;box-shadow:0 5px 12px rgba(0,10,40,.25)}</style><slot></slot>`);

define('speech-bubble', `<style>:host{display:block;flex:none}svg{display:block}</style>
<svg width="208" height="81" viewBox="0 0 208 81"><path fill="none" stroke="#fff" stroke-width="3.500" d="M30 56.500C13 55.500 2 43.500 2 30S13 3.500 30 3"/><path fill="none" stroke="#fff" stroke-width="2.500" d="M28 2.500H180"/><path fill="none" stroke="#fff" stroke-width="3.500" d="M178 3C196 3.500 206 15.500 206 30S196 55.500 178 56.500"/><path fill="none" stroke="#fff" stroke-width="1.800" d="M26 57H45L96 79.500"/><path stroke="#8593bb" stroke-width="1.500" d="M89 57H180"/>
<g fill="#fff" font-size="17" font-weight="800"><text x="27" y="35.500" font-size="11.500" textLength="11.500" lengthAdjust="spacingAndGlyphs">....</text><text x="40" y="35.500" textLength="138" lengthAdjust="spacingAndGlyphs">The Spread City</text><text x="179.500" y="35.500" font-size="11.500" textLength="11.500" lengthAdjust="spacingAndGlyphs">....</text></g></svg>`);

define('hero-section', `<style>
:host{display:flex;flex-direction:column;align-items:center;padding-left:1px;height:749px;box-sizing:border-box;font-family:Inter,sans-serif;padding-top:27px}
.round{height:138px;width:140px;overflow:hidden;display:grid;align-content:center;justify-content:center;flex:none}
haven-logo{width:140px;height:140px;border-radius:50%}
h1{margin:42px 2px 0 0;display:flex;gap:24px;font:700 90px/90px "Liberation Sans",sans-serif;color:#cce5ff;filter:drop-shadow(0 5px 4px rgba(0,5,30,.4))}
.grad{background:linear-gradient(90deg,#99ccff,#3397ff);-webkit-background-clip:text;background-clip:text;color:transparent}
speech-bubble{margin-top:40px}
.copy{margin-top:41px;display:flex;flex-direction:column;align-items:center;font-size:22.500px;line-height:36px;color:#b3bccf;-webkit-text-stroke:.25px}
.row{display:flex;gap:20px;margin-top:51px}
.wave{display:block;flex:none;width:1843px;height:81px;margin:19px 0 0 -1px}
</style>
<div class="round"><haven-logo></haven-logo></div>
<h1><fit-text w="482">Welcome to</fit-text><fit-text class="grad" w="823">Haven Word Church</fit-text></h1>
<speech-bubble></speech-bubble>
<div class="copy"><fit-text w="769">Experience God's love, grow in faith, and connect with a community that</fit-text><fit-text w="778">cares. Join us as we journey together in worship, fellowship, and service.</fit-text></div>
<div class="row"><action-button style="width:305px;background:#ff6b14;border-color:#ff6b14"><fit-text w="221">Join Us This Sunday</fit-text></action-button><action-button style="width:242px;background:#003ca3;border-color:#3395ff"><fit-text w="158">View Calendar</fit-text></action-button><action-button style="width:205px;background:#fff;border-color:#ff6b14;color:#ff6b14"><fit-text w="121">Contact Us</fit-text></action-button></div>
<svg class="wave" viewBox="66 917 1843 81"><path fill="#fff" d="M66 918C380 955 700 958 990 958H1050C1330 957 1620 965 1909 998H66z"/></svg>`);

define('web-page', `<style>:host{display:block;height:869px;margin-top:6px;background:#111827;border-radius:8px;overflow:hidden;width:1853px}
.view{width:1843px;height:849px;background:linear-gradient(135deg,#00133c 0%,#001e5a 46%,#002b7b 100%)}site-header{position:relative}</style>
<div class="view"><site-header></site-header><hero-section></hero-section></div>`);

define('task-bar', `<style>
:host{display:flex;align-items:center;height:60px;background:linear-gradient(90deg,#332013,#332014 60%,#2e2117);padding-left:21px;box-sizing:border-box}
.find{display:flex;align-items:center;width:275px;height:40px;border-radius:20px;background:#4b3a30;box-sizing:border-box;padding-left:14px;margin:0 3.500px 0 15.500px;color:#d9d3cf}
.slot{width:55px;height:60px;display:flex;flex-direction:column;align-items:center;flex:none;box-sizing:border-box;padding-top:15px}
.slot.big{padding-top:10px}
.slot.on{width:50px;height:50px;margin:0 2.500px;padding-top:10px;border-radius:5px;background:#422f24;box-shadow:inset 0 0 0 1px #503d32}
.slot u{width:8px;height:4px;border-radius:2px;background:#a29a95;margin-top:5px}
.slot.on u{width:30px;background:#ff9ba4}
.tray{display:flex;margin-left:81px;gap:9px}
.time{display:flex;flex-direction:column;align-items:flex-end;margin:-2px 0 0 12px;font-size:15px;line-height:20px;width:73px}
.badge{width:20px;height:20px;border-radius:50%;background:#f4836a;color:#111;text-align:center;line-height:20px;margin-left:14px}
</style>
<ui-icon name="widgets" w="30" h="28"></ui-icon><ui-icon name="win" w="29.500" style="margin-left:397px"></ui-icon>
<div class="find"><ui-icon name="tsearch" w="19"></ui-icon><fit-text w="52" style="margin-left:13px;font-size:16.500px">Search</fit-text></div>
<div class="slot"><ui-icon name="taskview" w="30"></ui-icon></div><div class="slot"><ui-icon name="chat" w="30"></ui-icon></div>
<div class="slot"><ui-icon name="folder" w="30"></ui-icon><u></u></div><div class="slot on"><ui-icon name="opera" w="29"></ui-icon><u style="margin-top:6px"></u></div>
<div class="slot"><ui-icon name="edge" w="30"></ui-icon></div><div class="slot"><ui-icon name="store" w="30"></ui-icon></div>
<div class="slot"><ui-icon name="chrome" w="30"></ui-icon></div><div class="slot"><ui-icon name="insta" w="30"></ui-icon></div>
<div class="slot"><ui-icon name="godot" w="30"></ui-icon></div><div class="slot"><ui-icon name="spotify" w="30"></ui-icon><u></u></div>
<div class="slot big"><ui-icon name="chrome2" w="40"></ui-icon><u style="margin-top:0"></u></div><div class="slot"><ui-icon name="git" w="30"></ui-icon><u></u></div>
<div class="slot"><ui-icon name="vscode" w="30"></ui-icon><u></u></div>
<div class="tray"><ui-icon name="up" w="20" h="22"></ui-icon><ui-icon name="sync" w="22"></ui-icon><ui-icon name="bt" w="20" h="22"></ui-icon><ui-icon name="cloud" w="22" style="margin-right:3px"></ui-icon><ui-icon name="wifi" w="22"></ui-icon><ui-icon name="sound" w="22"></ui-icon><ui-icon name="battery" w="22" style="margin-left:-1px"></ui-icon></div>
<div class="time"><fit-text w="50">1:41 PM</fit-text><fit-text w="70">6/27/2025</fit-text></div><span class="badge">1</span>`);

define('desktop-screen', `<style>:host{display:block;width:1920px;height:1080px}
.browser{display:flex;gap:5px;height:1020px;padding:1px 0 0 1px;box-sizing:border-box;background:#020515}
.main{flex:none;width:1852px;display:flex;flex-direction:column}
address-bar{margin-top:3px}</style>
<div class="browser"><side-bar></side-bar><div class="main"><tab-strip></tab-strip><address-bar></address-bar><bookmark-bar></bookmark-bar><web-page></web-page></div></div><task-bar></task-bar>`);
</script>
</body>
</html>
